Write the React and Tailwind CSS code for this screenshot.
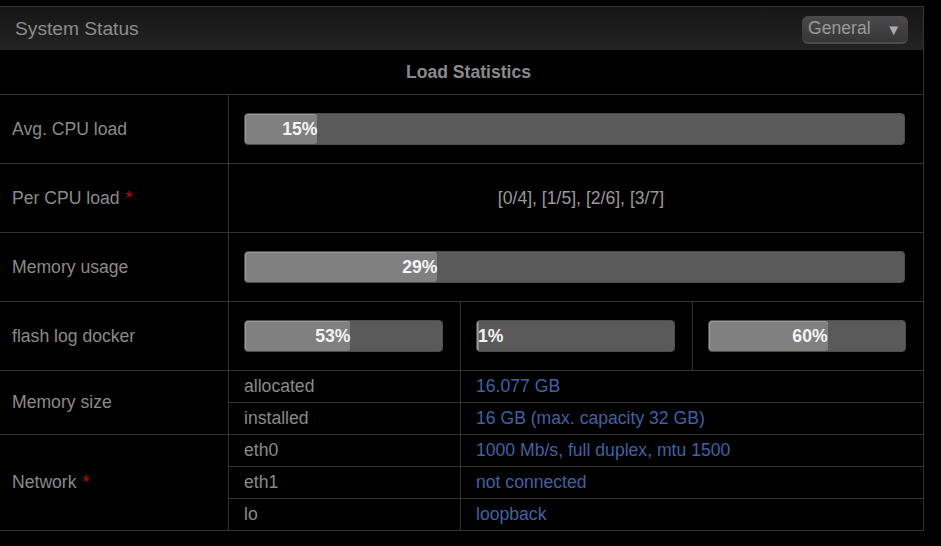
import React from "react";

const B = "border-[#333]";

function Bar({ pct, label }) {
  return (
    <div className="h-[32px] w-full rounded-[4px] bg-[#5a5a5a] border border-[#4d4d4d] overflow-hidden">
      <div
        className="h-full rounded-[3px] bg-[#808080] border-t border-l border-[#9b9b9b] text-right whitespace-nowrap text-[17.6px] font-bold leading-[29px] text-[#f4f4f4]"
        style={{ width: pct }}
      >
        {label}
      </div>
    </div>
  );
}

function Label({ children, star }) {
  return (
    <div className="flex items-center pl-[12px] text-[17.6px] text-[#8a8a8a]">
      {children}
      {star && <span className="text-[#cc0000] ml-[6px]">*</span>}
    </div>
  );
}

function SubRows({ rows }) {
  return (
    <div className={`border-l ${B} flex flex-col`}>
      {rows.map(([k, v], i) => (
        <div
          key={k}
          className={`grid grid-cols-[231px_1fr] ${i < rows.length - 1 ? `h-[32px] border-b ${B}` : "h-[31px]"}`}
        >
          <div className="flex items-center pl-[15px] text-[17.6px] text-[#8a8a8a]">{k}</div>
          <div className={`flex items-center pl-[15px] border-l ${B} text-[17.6px] text-[#4160a5]`}>{v}</div>
        </div>
      ))}
    </div>
  );
}

export default function App() {
  return (
    <div
      className="w-[941px] h-[546px] bg-black pt-[6px] overflow-hidden"
      style={{ fontFamily: '"Liberation Sans", Arial, sans-serif' }}
    >
      <div className={`w-[924px] border-r ${B}`}>
        {/* header */}
        <div className={`h-[44px] border-t ${B} bg-gradient-to-b from-[#161616] to-[#232323] flex items-center justify-between pl-[15px] pr-[15px]`}>
          <span className="text-[19.2px] text-[#8c8c8c] mt-[1px]">System Status</span>
          <div className="w-[106px] h-[28px] rounded-[6px] bg-gradient-to-b from-[#4a4a4a] to-[#363636] border-b-2 border-[#4a4a4a] flex items-center justify-between pl-[6px] pr-[7px] mt-[3px]">
            <span className="text-[17.6px] text-[#9a9a9a] leading-none">General</span>
            <span className="text-[15px] text-[#aaaaaa] leading-none">▼</span>
          </div>
        </div>

        {/* table */}
        <div className={`h-[45px] border-b ${B} flex items-center justify-center pl-[14px] text-[17.6px] font-bold text-[#8a8a8a]`}>
          Load Statistics
        </div>

        <div className={`grid grid-cols-[228px_1fr] h-[69px] border-b ${B}`}>
          <Label>Avg. CPU load</Label>
          <div className={`border-l ${B} flex items-center pl-[15px] pr-[18px] pb-[1px]`}>
            <Bar pct="11%" label="15%" />
          </div>
        </div>

        <div className={`grid grid-cols-[228px_1fr] h-[69px] border-b ${B}`}>
          <Label star>Per CPU load</Label>
          <div className={`border-l ${B} flex items-center justify-center pl-[10px] text-[17.6px] text-[#999999]`}>
            [0/4], [1/5], [2/6], [3/7]
          </div>
        </div>

        <div className={`grid grid-cols-[228px_1fr] h-[69px] border-b ${B}`}>
          <Label>Memory usage</Label>
          <div className={`border-l ${B} flex items-center pl-[15px] pr-[18px] pb-[1px]`}>
            <Bar pct="29.2%" label="29%" />
          </div>
        </div>

        <div className={`grid grid-cols-[228px_1fr] h-[69px] border-b ${B}`}>
          <Label>flash log docker</Label>
          <div className={`border-l ${B} grid grid-cols-[231px_232px_1fr]`}>
            <div className="flex items-center pl-[15px] pr-[17px] pb-[1px]">
              <Bar pct="53.5%" label="53%" />
            </div>
            <div className={`border-l ${B} flex items-center pl-[15px] pr-[17px] pb-[1px]`}>
              <Bar pct="1%" label="1%" />
            </div>
            <div className={`border-l ${B} flex items-center pl-[15px] pr-[17px] pb-[1px]`}>
              <Bar pct="60.5%" label="60%" />
            </div>
          </div>
        </div>

        <div className={`grid grid-cols-[228px_1fr] border-b ${B}`}>
          <Label>Memory size</Label>
          <SubRows
            rows={[
              ["allocated", "16.077 GB"],
              ["installed", "16 GB (max. capacity 32 GB)"],
            ]}
          />
        </div>

        <div className={`grid grid-cols-[228px_1fr] border-b ${B}`}>
          <Label star>Network</Label>
          <SubRows
            rows={[
              ["eth0", "1000 Mb/s, full duplex, mtu 1500"],
              ["eth1", "not connected"],
              ["lo", "loopback"],
            ]}
          />
        </div>
      </div>
    </div>
  );
}
